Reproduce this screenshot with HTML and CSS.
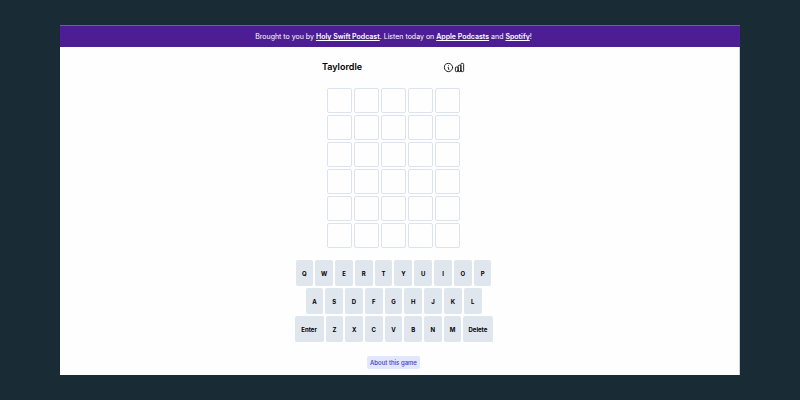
FILE: index.html
```
<!DOCTYPE html>
<html lang="en">
<head>
  <meta charset="UTF-8">
  <meta name="viewport" content="width=device-width, initial-scale=1.0">
  <title>Taylordle</title>
  <link rel="stylesheet" href="styles.css">
</head>
<body>
  <div class="app">
    <div class="banner">
      Brought to you by <a href="#podcast">Holy Swift Podcast</a>. Listen today on <a href="#apple">Apple Podcasts</a> and <a href="#spotify">Spotify</a>!
    </div>
    <main class="game">
      <header class="header">
        <h1>Taylordle</h1>
        <button type="button" class="icon-btn" aria-label="How to play">
          <svg viewBox="0 0 24 24"><path d="M13 16h-1v-4h-1m1-4h.01M21 12a9 9 0 11-18 0 9 9 0 0118 0z"/></svg>
        </button>
        <button type="button" class="icon-btn" aria-label="Statistics">
          <svg viewBox="0 0 24 24"><path d="M9 19v-6a2 2 0 00-2-2H5a2 2 0 00-2 2v6a2 2 0 002 2h2a2 2 0 002-2zm0 0V9a2 2 0 012-2h2a2 2 0 012 2v10m-6 0a2 2 0 002 2h2a2 2 0 002-2m0 0V5a2 2 0 012-2h2a2 2 0 012 2v14a2 2 0 01-2 2h-2a2 2 0 01-2-2z"/></svg>
        </button>
      </header>

      <div class="board" id="board"></div>

      <div class="keyboard">
        <div class="key-row row-top">
          <button type="button">Q</button>
          <button type="button">W</button>
          <button type="button">E</button>
          <button type="button">R</button>
          <button type="button">T</button>
          <button type="button">Y</button>
          <button type="button">U</button>
          <button type="button">I</button>
          <button type="button">O</button>
          <button type="button">P</button>
        </div>
        <div class="key-row row-middle">
          <button type="button">A</button>
          <button type="button">S</button>
          <button type="button">D</button>
          <button type="button">F</button>
          <button type="button">G</button>
          <button type="button">H</button>
          <button type="button">J</button>
          <button type="button">K</button>
          <button type="button">L</button>
        </div>
        <div class="key-row row-bottom">
          <button type="button" class="wide">Enter</button>
          <button type="button">Z</button>
          <button type="button">X</button>
          <button type="button">C</button>
          <button type="button">V</button>
          <button type="button">B</button>
          <button type="button">N</button>
          <button type="button">M</button>
          <button type="button" class="wide">Delete</button>
        </div>
      </div>

      <button type="button" class="about">About this game</button>
    </main>
  </div>

  <script>
    const board = document.getElementById('board');
    // 6 guesses of 5 letters
    for (let i = 0; i < 30; i++) {
      const cell = document.createElement('div');
      cell.className = 'cell';
      board.appendChild(cell);
    }
  </script>
</body>
</html>
```
FILE: styles.css
```
* {
    box-sizing: border-box;
}
body {
    margin: 0;
    padding: 25px 60px;
    min-height: 100vh;
    display: flex;
    background-color: #192b34;
    color: #000;
    font-family: Inter, "Liberation Sans", sans-serif;
}
button {
    font-family: inherit;
    border: none;
    padding: 0;
    cursor: pointer;
}
.app {
    flex: 1;
    display: flex;
    flex-direction: column;
    background: #fefefe;
}
.banner {
    padding: 0 13px 0 0;
    border-top: 1px solid #7c55aa;
    background: #4c1d95;
    color: #fff;
    font-size: 7px;
    line-height: 21px;
    text-align: center;
}
.banner a {
    color: #fff;
    font-weight: 600;
}
.game {
    flex: 1;
    display: flex;
    flex-direction: column;
    align-items: center;
    padding: 13px 12px 6px 0;
    border-right: 1px solid #ccd2d6;
}
.header {
    display: flex;
    align-items: center;
    width: 143px;
    margin-bottom: 14px;
}
.header h1 {
    flex: 1;
    margin: 0;
    font-size: 9px;
    line-height: 14px;
    font-weight: 600;
}
.icon-btn {
    display: flex;
    background: none;
}
.icon-btn svg {
    width: 11px;
    height: 11px;
    fill: none;
    stroke: #111;
    stroke-width: 2;
    stroke-linecap: round;
    stroke-linejoin: round;
}
.board {
    display: grid;
    grid-template-columns: repeat(5, 25px);
    gap: 2px;
    margin-bottom: 12px;
}
.cell {
    height: 25px;
    border: 1px solid #dce3ee;
    border-radius: 2px;
}
.keyboard {
    display: flex;
    flex-direction: column;
    align-items: center;
    gap: 2px;
    margin-bottom: 14px;
}
.key-row {
    display: flex;
    gap: 2px;
}
.row-top {
    width: 196px;
}
.row-middle {
    width: 176px;
}
.row-bottom {
    width: 198px;
}
.key-row button {
    flex: 1 1 0;
    height: 26px;
    border-radius: 2px;
    background: #e0e6ee;
    color: #000;
    font-size: 6px;
    font-weight: 700;
}
.key-row .wide {
    flex-grow: 1.65;
}
.about {
    padding: 0 3px;
    border-radius: 2px;
    background: #e0e7ff;
    color: #4338ca;
    font-size: 6px;
    line-height: 13px;
    font-weight: 500;
}
```
